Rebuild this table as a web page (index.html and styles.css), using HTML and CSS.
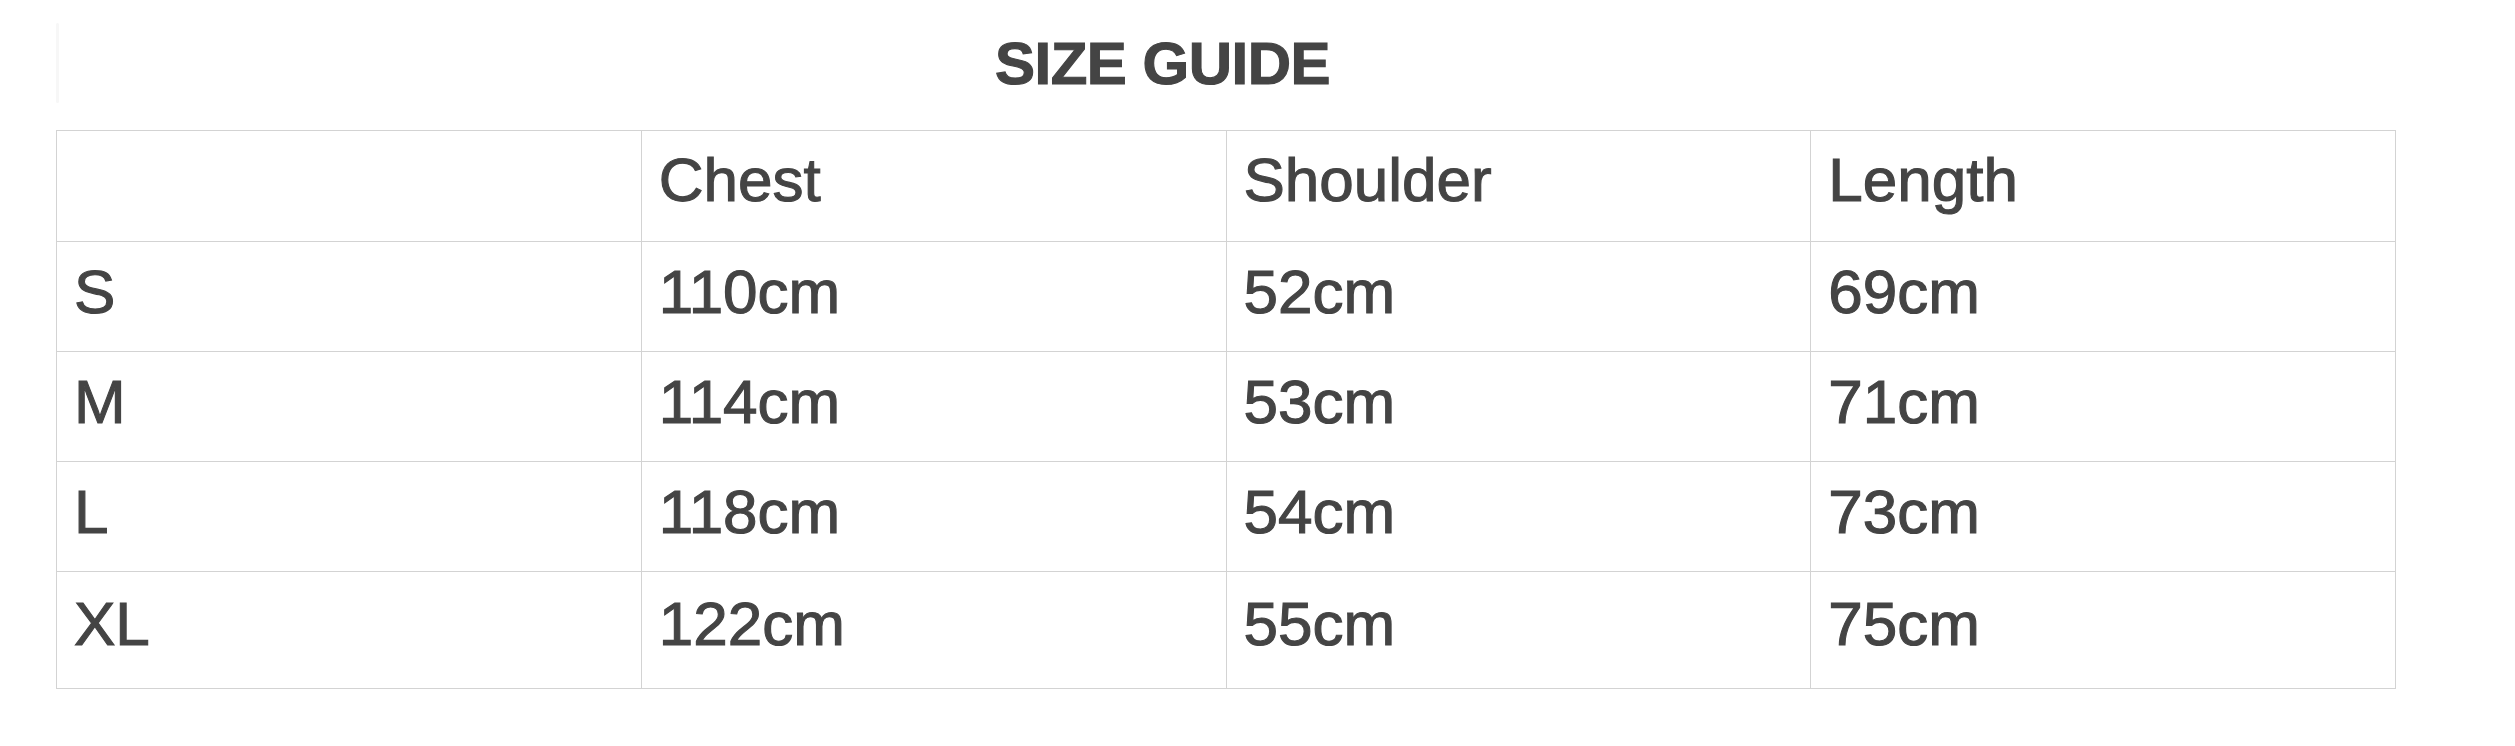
FILE: index.html
```html
<!DOCTYPE html>
<html lang="en">
<head>
<meta charset="utf-8">
<title>Size Guide</title>
<link rel="stylesheet" href="styles.css">
</head>
<body>
<main class="page">
  <header class="guide-head">
    <span class="edge-mark"></span>
    <h1 class="guide-title">SIZE GUIDE</h1>
  </header>
  <table class="size-table">
    <thead>
      <tr><th></th><th>Chest</th><th>Shoulder</th><th>Length</th></tr>
    </thead>
    <tbody>
      <tr><td>S</td><td>110cm</td><td>52cm</td><td>69cm</td></tr>
      <tr><td>M</td><td>114cm</td><td>53cm</td><td>71cm</td></tr>
      <tr><td>L</td><td>118cm</td><td>54cm</td><td>73cm</td></tr>
      <tr class="last"><td>XL</td><td>122cm</td><td>55cm</td><td>75cm</td></tr>
    </tbody>
  </table>
</main>
</body>
</html>
```

FILE: styles.css
```css
html, body {
  margin: 0;
  padding: 0;
  background: #ffffff;
}

body {
  font-family: "Liberation Sans", Arial, Helvetica, sans-serif;
  color: #444444;
}

.page {
  width: 2515px;
  height: 746px;
  display: flex;
  flex-direction: column;
  padding-left: 56px;
  box-sizing: border-box;
}

.guide-head {
  display: flex;
  align-items: flex-start;
  height: 130px;
  width: 2340px;
}

.edge-mark {
  width: 3px;
  height: 80px;
  margin-top: 23px;
  background: #f7f7f7;
  border-radius: 2px;
  flex: none;
}

.guide-title {
  flex: 1;
  margin: 29px 0 0 0;
  padding-right: 130px;
  text-align: center;
  font-size: 60px;
  font-weight: 700;
  letter-spacing: -0.5px;
  line-height: 69px;
  color: #444444;
  -webkit-text-stroke: 1.1px #444444;
}

.size-table {
  width: 2340px;
  border-collapse: collapse;
  table-layout: fixed;
  font-size: 62px;
}

.size-table th,
.size-table td {
  border: 1px solid #d3d3d3;
  height: 110px;
  box-sizing: border-box;
  padding: 0 16px 10px 17px;
  text-align: left;
  font-weight: 400;
  line-height: 71px;
  vertical-align: middle;
  color: #444444;
  -webkit-text-stroke: 1.1px #444444;
}

.size-table thead th {
  height: 111px;
  padding-bottom: 14px;
}

.size-table tr.last td {
  height: 117px;
  padding-bottom: 13px;
}
```
